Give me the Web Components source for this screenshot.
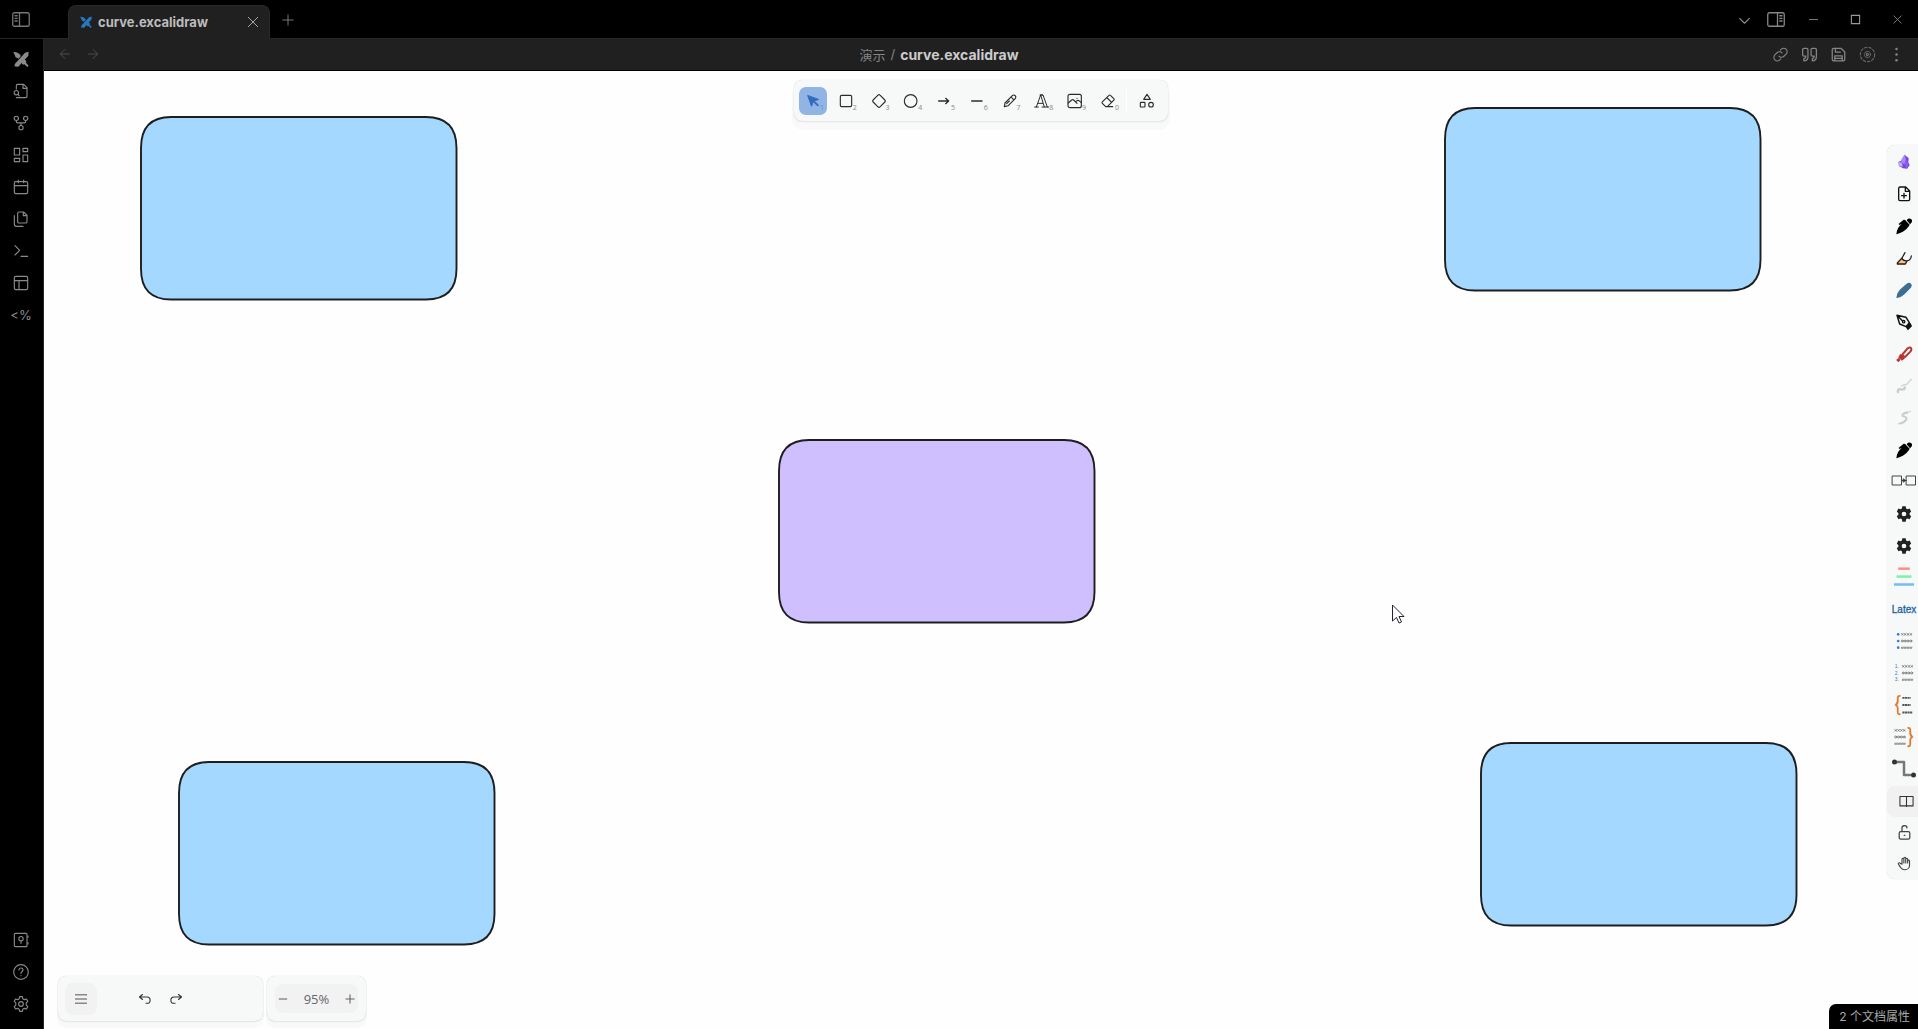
<!DOCTYPE html>
<html lang="zh">
<head>
<meta charset="utf-8">
<title>curve.excalidraw</title>
<style>
html, body { margin: 0; height: 100%; background: #000; }
body { font-family: Inter, "Noto Sans CJK SC", sans-serif; overflow: hidden; }
</style>
</head>
<body>
<app-window></app-window>
<script>
const S = (box, body, extra = '') => `<svg viewBox="${box}" fill="none" stroke="currentColor" stroke-width="1.7" stroke-linecap="round" stroke-linejoin="round" aria-hidden="true" ${extra}>${body}</svg>`;
const B24 = '0 0 24 24';
const swords = '<g fill="currentColor" stroke="none"><path d="M18 2.500l5.500-1.500-.5 6L10 21.500c-.5 1.500-2 2.500-3.500 2L2 23l1-4z"/><path d="M.5 1.500C5 1 9.500 3 11.800 7.500L8.500 11.500 4 9.500z"/><path d="M12.500 17.500l4.500-5 3 2.500-.5 2.500 4 4.500-2 2-4.500-4-2 .5z"/></g>';
const pen = '<g fill="#000" stroke="none"><path d="M15 4.500l5.500 5.500c-3 5.500-9 11.500-20 14.500C1 17 4.500 12 8.800 8.500l-3.300 2-1.700-1.400 7.700-6.600 2.500.5z"/><path d="M16 3.500c1.500-3 4.500-3.600 6.600-2 2.300 1.900 2 4.700-.2 6.500l-1.400 1.200z"/></g>';
const gear = '<path fill="#222" stroke="none" fill-rule="evenodd" d="M9.500 .500h5l.7 3.200 2 1.100 3.100-1 2.500 4.300-2.400 2.700v2.400l2.400 2.200-2.500 4.300-3.100-1-2 1.100-.7 3.700h-5l-.7-3.700-2-1.100-3.100 1-2.500-4.300 2.400-2.200v-2.400L1.200 8.100l2.500-4.300 3.100 1 2-1.100zM12 8.500a3.500 3.500 0 1 0 0 7 3.500 3.500 0 0 0 0-7z"/>';
const row = (x, y, kind) => {
  let out = '';
  for (let i = 0; i < 4; i++) {
    const a = x + i * 3.4;
    out += kind === 'x' ? `<path d="M${a} ${y - 1}l2.200 2m0-2l-2.200 2"/>` : kind === 'o' ? `<circle cx="${a + 1}" cy="${y}" r="1.200"/>` : `<path d="M${a} ${y - .5}h2.400M${a} ${y + .7}h2"/>`;
  }
  return `<g stroke="#666" stroke-width=".9">${out}</g>`;
};
const ICONS = {
  panelLeft: S('0 0 24 20', '<rect x="1" y="1" width="22" height="18" rx="2.500"/><path d="M10 1v18M4 5h3M4 8.500h3M4 12h3"/>'),
  panelRight: S('0 0 24 20', '<rect x="1" y="1" width="22" height="18" rx="2.500"/><path d="M14 1v18M17 5h3M17 8.500h3M17 12h3"/>'),
  swords: S(B24, swords),
  fileSearch: S(B24, '<path d="M5 9V4a2 2 0 0 1 2-2h9l5 5v13a2 2 0 0 1-2 2H5M15 2v6h6"/><circle cx="5" cy="14.500" r="3.300"/><path d="M7.500 17l2 2.500"/>'),
  graph: S(B24, '<circle cx="5" cy="5" r="3.200"/><circle cx="19" cy="5" r="3.200"/><circle cx="12" cy="19" r="3.200"/><path d="M5 8.200v1.600a2 2 0 0 0 2 2h10a2 2 0 0 0 2-2V8.200M12 12v3.800"/>'),
  grid: S(B24, '<path d="M2 2h8v10H2zM15 2h7v5h-7zM15 12h7v10h-7zM2 17h8v5H2z"/>'),
  calendar: S(B24, '<rect x="2" y="4" width="20" height="18" rx="2"/><path d="M8 1.500v4M16 1.500v4M2 10h20"/>'),
  copy: S(B24, '<path d="M16 1.500H9a2 2 0 0 0-2 2V16a2 2 0 0 0 2 2h10a2 2 0 0 0 2-2V6.500zM15.500 1.500V7H21M2 7v13a3 3 0 0 0 3 3h10"/>'),
  terminal: S(B24, '<path d="M3 4l7 7-7 7M12 20h10"/>'),
  layout: S(B24, '<rect x="2" y="2" width="20" height="20" rx="2"/><path d="M2 8.500h20M9 8.500V22"/>'),
  vault: S(B24, '<rect x="2" y="2" width="19" height="20" rx="1.500"/><circle cx="12" cy="10" r="3.200"/><path d="M12 13.200V17M22.500 6v2M22.500 16v2"/>'),
  help: S(B24, '<circle cx="12" cy="12" r="11"/><path d="M9 9a3 3 0 0 1 6 0c0 2-3 2.500-3 5M12 17.500v.2"/>'),
  settings: S(B24, '<path d="M10 1h4l.8 3.200L17 5.500l3.200-.9 2 3.500-2.400 2.300v3.200l2.400 2.300-2 3.500-3.200-.9-2.200 1.300L14 23h-4l-.8-3.200L7 18.500l-3.200.9-2-3.500 2.400-2.300v-3.200L1.800 8.100l2-3.500 3.200.9 2.200-1.300z"/><circle cx="12" cy="12" r="3.500"/>'),
  close: S(B24, '<path d="M4 4l16 16M20 4L4 20"/>'),
  plus: S(B24, '<path d="M12 3v18M3 12h18"/>'),
  minus: S(B24, '<path d="M3 12h18"/>'),
  zoomIn: S(B24, '<path stroke-width="2.600" stroke-linecap="butt" d="M12 1v22M1 12h22"/>'),
  zoomOut: S(B24, '<path stroke-width="2.600" stroke-linecap="butt" d="M2 12h20"/>'),
  square: S(B24, '<path stroke-linejoin="miter" stroke-width="2.400" d="M3 3h18v18H3z"/>'),
  chevron: S(B24, '<path stroke-width="2.200" d="M3 8l9 9 9-9"/>'),
  left: S(B24, '<path stroke-width="2" d="M23 12H1m11-11L1 12l11 11"/>'),
  right: S(B24, '<path stroke-width="2" d="M1 12h22M12 1l11 11-11 11"/>'),
  link: S(B24, '<path d="M9.500 14.500a5.500 5.500 0 0 0 8 .3l3.500-3.500a5.500 5.500 0 0 0-7.800-7.800l-1.500 1.500M14.500 9.500a5.500 5.500 0 0 0-8-.3L3 12.700a5.500 5.500 0 0 0 7.800 7.800l1.500-1.500"/>'),
  quote: S(B24, '<path stroke-width="2" d="M3 2h4.500a2 2 0 0 1 2 2v11c0 5-2 7-6.500 7v-3.500c2 0 3-1 3-4H3a2 2 0 0 1-2-2V4a2 2 0 0 1 2-2zM16.500 2H21a2 2 0 0 1 2 2v11c0 5-2 7-6.500 7v-3.500c2 0 3-1 3-4h-3a2 2 0 0 1-2-2V4a2 2 0 0 1 2-2z"/>'),
  save: S(B24, '<path stroke-width="2" d="M4 2h12l6 6v12a2 2 0 0 1-2 2H4a2 2 0 0 1-2-2V4a2 2 0 0 1 2-2zM7 2v6h8M6 22v-8h12v8M6 18h12"/>'),
  dashGear: S(B24, '<g stroke="#6c6c6c"><circle cx="12" cy="12" r="11.500" stroke-dasharray="4 3"/><circle cx="12" cy="12" r="5" stroke-dasharray="2.500 1.500" stroke-width="1.500"/><path d="M10.500 9.500l4 2.500-4 2.500z"/></g>'),
  dots: S(B24, '<g fill="currentColor" stroke="none"><circle cx="12" cy="3" r="2"/><circle cx="12" cy="12" r="2"/><circle cx="12" cy="21" r="2"/></g>'),
  cursor: S(B24, '<path fill="currentColor" d="M3 3l6.500 18 3-7.800L20 20.500l1.500-1.500-7.700-7L21 9.500z"/>'),
  rect: S(B24, '<rect x="3.500" y="3.500" width="17" height="17" rx="2"/>'),
  diamond: S(B24, '<path d="M10.500 3.200a2 2 0 0 1 3 0l7.300 7.300a2 2 0 0 1 0 3l-7.300 7.300a2 2 0 0 1-3 0l-7.300-7.300a2 2 0 0 1 0-3z"/>'),
  circle: S(B24, '<circle cx="11.500" cy="12" r="9.500"/>'),
  arrow: S(B24, '<path stroke-width="2" d="M4 12h15m-4.500-4l4.500 4-4.500 4"/>'),
  line: S(B24, '<path stroke-width="2" d="M4 12h15.500"/>'),
  pencil: S(B24, '<path d="M3.500 20.500l1-5.500L15.500 4a3 3 0 0 1 4.300 4.300L9 19.200zM14.500 7l2.800 2.800M11 12l-4 4"/>'),
  text: S(B24, '<path stroke-width="1.500" d="M1 21h5.500M12 21h10M3.500 21L10 3h3.500l6.500 18M10 3l5.500 18M6 15.500h7M9 3h4"/>'),
  image: S(B24, '<rect x="1.500" y="2" width="20" height="20" rx="3"/><path d="M15 8h.1M2 15l5-4.500q2-1 3 0l5 5M13 13l2-1.500q1.500-1 3 0l3.500 3"/>'),
  eraser: S(B24, '<path d="M19 20.500H8.500l-5-5a1.500 1.500 0 0 1 0-2.200L13.500 3.500a1.500 1.500 0 0 1 2.200 0l5 5a1.500 1.500 0 0 1 0 2.200L11 20.500M17.500 14L10 6.800"/>'),
  shapes: S(B24, '<path d="M12 2l5 7.500H7z"/><rect x="2" y="14" width="7" height="7" rx="1"/><circle cx="18" cy="17.500" r="3.500"/>'),
  menu: S(B24, '<path stroke-linecap="butt" stroke-width="2.800" d="M0 3.500h24M0 12h24M0 20.500h24"/>'),
  undo: S(B24, '<path stroke-width="2.200" d="M7 3L1 8l6 5M1 8h15a6 6 0 0 1 0 12.500h-2"/>'),
  redo: S(B24, '<path stroke-width="2.200" d="M17 3l6 5-6 5M23 8H8a6 6 0 0 0 0 12.500h2"/>'),
  crystal: S(B24, '<g stroke="none"><path fill="#7747d8" d="M13 1l6 5.500-.5 6L20.500 17l-4 5-6-.5-6-3.500-1-6.500 4-1z"/><path fill="#a88bfa" d="M13 1L8.500 7l-.5 5 4.500 3.500L15 9z"/><path fill="#8a5cf5" d="M15 9l-2.500 6.500L17 22l2-8z"/><path fill="#c3b0f7" d="M4 12l5 1 1 6-5-1z"/></g>'),
  filePlus: S(B24, '<path stroke="#111" stroke-width="2" d="M6 1.500h8.500l6 6V20a2 2 0 0 1-2 2H6a2 2 0 0 1-2-2V3.500a2 2 0 0 1 2-2zM14 2v6h6M12 11v7M8.500 14.500h7"/>'),
  pen: S(B24, pen),
  highlighter: S(B24, '<path fill="#ffc078" stroke="#ffc078" d="M3 19l6-6 7 6-2 2H3z"/><path stroke="#222" stroke-width="1.900" d="M13.500 4L9 12l-7 7.500V21h12l2-3.500M23 9q-1 7-7 7.500-6-.5-7-4.500"/>'),
  marker: S(B24, '<path fill="#3e6f92" stroke="#3e6f92" d="M1.500 23c.5-5 2.500-8.500 5.500-11.500L17 3c3.500-2.500 7.500 1 5 4.500l-9.500 10C9.500 20.500 6.500 22.500 1.500 23z"/>'),
  nib: S(B24, '<path stroke="#111" stroke-width="2.200" d="M1.500 2l4 13 9.500 4 5-6-5-8zM2.500 3l7 7"/><circle cx="11.500" cy="11.500" r="1.800" stroke="#111" stroke-width="2"/><path fill="#111" stroke="#111" d="M16 20l5-6 2 4-5 5z"/>'),
  redPen: S(B24, '<path fill="#fff" stroke="#b93434" stroke-width="3" d="M9 13.500L17 4q4-3 5.500-1t-1 5.500l-8 8z"/><path fill="#b93434" stroke="#b93434" d="M6.500 13l6 5-3.500 3-4.500-4zM1.500 21l2.500-2 1.500 2-2 2z"/>'),
  scribbleA: S(B24, '<path stroke="#ccc" stroke-width="3.600" d="M3 21q-1-5 4-4 7 1 6-3"/><path stroke="#d2d2d2" stroke-width="2" d="M8 12q5-3 8-2l2-3 5-5"/>'),
  scribbleB: S(B24, '<path stroke="#ccc" stroke-width="3.200" d="M17 4q-9 1-7 5 8 2 5 6-3 4-8 5"/><path stroke="#ccc" stroke-width="1.500" d="M3 21l8-3M14 4l8-2"/>'),
  boxes: S('0 0 24 16', '<g stroke="#444" stroke-width="1"><path d="M.5 3h9v9h-9zM14.500 3h9v9h-9zM9.500 7.500h5"/><path fill="#222" d="M11.500 6l2 1.500-2 1.500z"/></g>'),
  gear: S(B24, gear),
  bars: S(B24, '<g stroke-linecap="butt"><path stroke="#ff8f84" stroke-width="3" d="M5 2h14"/><path stroke="#7df2ad" stroke-width="3" d="M3 11.500h18"/><path stroke="#71bdf5" stroke-width="3" d="M0 21h24"/></g>'),
  bullets: S(B24, `<g fill="#2d7fd0" stroke="none"><circle cx="5" cy="4" r="1.600"/><circle cx="5" cy="12" r="1.600"/><circle cx="5" cy="20" r="1.600"/></g>${row(9, 4, 'x')}${row(9, 12, 'o')}${row(9, 20, '-')}`),
  numbers: S(B24, `<g fill="#3a7eb4" stroke="none" font-family="Liberation Sans" font-size="6"><text x="1" y="6">1.</text><text x="1" y="14">2.</text><text x="1" y="22">3.</text></g>${row(10, 4, 'x')}${row(10, 12, 'o')}${row(10, 20, '-')}`),
  braceL: S(B24, '<path stroke="#dc7d35" stroke-width="2.200" d="M7 1Q4 1 4.500 5.500T2 12q3 1 2.500 6.500T7 23"/><g stroke="#555" stroke-width="2.200" stroke-dasharray="2.600 .5" stroke-linecap="butt"><path d="M10 3.500h10M10 12h10M10 21h12"/></g>'),
  braceR: S(B24, `<path stroke="#dc7d35" stroke-width="2.200" d="M17 1q3 0 2.500 4.500T22 12q-3 1-2.500 6.500T17 23"/>${row(1, 4, 'x')}${row(1, 12, 'o')}${row(1, 20, '-')}`),
  connector: S(B24, '<path stroke="#777" stroke-width="2.500" d="M4 5h8v13h6"/><g fill="#333" stroke="none"><circle cx="2.500" cy="5" r="2.500"/><circle cx="21.500" cy="18" r="2.500"/></g>'),
  book: S(B24, '<path stroke="#333" d="M1.500 4h21v15h-21zM12 4v16"/>'),
  unlock: S(B24, '<rect x="3.500" y="10.500" width="17" height="12" rx="2.500" stroke="#444" stroke-width="2"/><path stroke="#444" stroke-width="2" d="M8 10.500V5.500a4 4 0 0 1 8-1M11.500 16.500h1"/>'),
  hand: S(B24, '<path stroke="#444" stroke-width="1.800" d="M8 13V5a1.500 1.500 0 0 1 3 0v6-7.500a1.500 1.500 0 0 1 3 0V11 5a1.500 1.500 0 0 1 3 0v6-3a1.500 1.500 0 0 1 3 0v7a7 7 0 0 1-7 7h-1c-3 0-4-1-6-3.500l-3.500-5a1.600 1.600 0 0 1 2.500-2z"/>')
};

class UiIcon extends HTMLElement {
  connectedCallback() {
    this.attachShadow({ mode: 'open' }).innerHTML = `<style>
      :host { display: block; flex: none; width: var(--icon, 16px); }
      svg { display: block; width: 100%; height: auto; overflow: visible; }
    </style>${ICONS[this.getAttribute('name')]}`;
  }
}
customElements.define('ui-icon', UiIcon);

const RESET = `<style>
  * { box-sizing: border-box; }
  button { font: inherit; color: inherit; background: none; border: 0; padding: 0; margin: 0; display: flex; align-items: center; justify-content: center; }
</style>`;
const btn = (name, label, cls = '') => `<button type="button" class="${cls}" aria-label="${label}"><ui-icon name="${name}"></ui-icon></button>`;
const define = (tag, html) => {
  const t = document.createElement('template');
  t.innerHTML = RESET + html;
  customElements.define(tag, class extends HTMLElement {
    connectedCallback() {
      this.attachShadow({ mode: 'open' }).append(t.content.cloneNode(true));
    }
  });
};

define('title-bar', `<style>
  :host { display: flex; height: 39px; color: #999; border-bottom: 1px solid #262626; background: #000; }
  .toggle { width: 44px; --icon: 18px; padding-right: 2px; color: #777; }
  .tab { display: flex; align-items: center; gap: 6px; width: 202px; margin: 5px 0 -1px 24px; padding: 0 9px 2px 11px; background: #202020; border: 1px solid #292929; border-bottom: 0; border-radius: 8px 8px 0 0; color: #bcbcbc; font-size: 13px; font-weight: 700; --icon: 12px; }
  .tab ui-icon[name=swords] { color: #2878bd; }
  .tab span { flex: 1; }
  .tab button { width: 14px; --icon: 14px; color: #aaa; }
  .add { width: 36px; padding-top: 2px; --icon: 14px; color: #777; }
  .space { flex: 1; }
  .side { width: 32px; --icon: 18px; color: #888; }
  .small { --icon: 13px; padding-top: 2px; }
  .win { width: 42px; --icon: 11px; }
</style>
${btn('panelLeft', '侧边栏', 'toggle')}
<div class="tab"><ui-icon name="swords"></ui-icon><span>curve.excalidraw</span>${btn('close', '关闭标签页')}</div>
${btn('plus', '新标签页', 'add')}<div class="space"></div>
${btn('chevron', '标签页列表', 'side small')}${btn('panelRight', '右侧边栏', 'side')}
${btn('minus', '最小化', 'win')}${btn('square', '最大化', 'win')}${btn('close', '关闭', 'win')}`);

define('side-ribbon', `<style>
  :host { display: flex; flex-direction: column; justify-content: space-between; width: 44px; padding: 4px 0 9px; border-right: 1px solid #262626; box-sizing: border-box; background: #000; color: #8a8a8a; --icon: 16px; }
  button { width: 42px; height: 32px; font-size: 13px; }
</style>
<nav>${[['swords', '新建绘图'], ['fileSearch', '快速切换'], ['graph', '关系图谱'], ['grid', '白板'], ['calendar', '日记'], ['copy', '模板'], ['terminal', '命令面板'], ['layout', '工作区']].map(a => btn(...a)).join('')}<button type="button">&lt;%</button></nav>
<div>${btn('vault', '仓库')}${btn('help', '帮助')}${btn('settings', '设置')}</div>`);

define('view-header', `<style>
  :host { display: flex; align-items: center; height: 32px; box-sizing: border-box; padding: 0 7px 1px; background: #202020; border-bottom: 1px solid #000; color: #858585; font-size: 13px; }
  .nav, .actions { display: flex; }
  .nav { margin-right: 5px; color: #555; --icon: 10px; }
  .nav button { width: 28px; height: 28px; }
  .title { flex: 1; display: flex; justify-content: center; align-items: center; gap: 5px; }
  .title a { color: inherit; text-decoration: none; }
  .title strong { font-size: 14px; font-weight: 700; color: #ccc; }
  .actions { --icon: 15px; }
  .actions button { width: 29px; height: 28px; }
</style>
<div class="nav">${btn('left', '后退')}${btn('right', '前进')}</div>
<div class="title"><a href="#">演示</a><span>/</span><strong>curve.excalidraw</strong></div>
<div class="actions">${[['link', '链接'], ['quote', '引用'], ['save', '保存'], ['dashGear', '脚本'], ['dots', '更多选项']].map(a => btn(...a)).join('')}</div>`);

define('tool-bar', `<style>
  :host { display: flex; align-items: center; height: 41px; box-sizing: border-box; width: 374px; padding: 0 7px 0 5px; background: #f7f8f8; border-radius: 8px; box-shadow: 0 0 1px #0003, 0 1px 2px #00000012, 0 7px 0 2px #00000005; color: #2b2b2b; }
  .tools { flex: 1; display: flex; justify-content: space-between; }
  button { position: relative; width: 28px; height: 28px; border-radius: 7px; }
  .on { background: #91b4e4; --icon: 14px; }
  .on ui-icon { color: #2f6cbd; }
  .tools span { position: absolute; right: 3px; bottom: 3px; font: 7px/8px "Open Sans", sans-serif; color: #888; }
  .tools .on span { color: #5c8bd0; }
  .divider { width: 1px; height: 24px; margin: 0 6px 0 4px; background: #fff; }
</style>
<div class="tools">${['cursor', 'rect', 'diamond', 'circle', 'arrow', 'line', 'pencil', 'text', 'image', 'eraser'].map((n, i) => `<button type="button" aria-label="${n}" class="${i ? '' : 'on'}"><ui-icon name="${n}"></ui-icon><span>${(i + 1) % 10}</span></button>`).join('')}</div>
<div class="divider"></div>${btn('shapes', '更多工具')}`);

define('bottom-bar', `<style>
  :host { display: flex; gap: 4px; height: 45px; color: #333; }
  .card { display: flex; align-items: center; background: #f7f8f8; border-radius: 8px; box-shadow: 0 0 1px #0003, 0 1px 2px #00000012, 0 6px 0 1px #00000005; }
  .history { width: 205px; padding: 0 7px; --icon: 12px; }
  .menu { width: 32px; height: 32px; margin-right: 32px; border-radius: 8px; background: #f2f2f3; color: #888; }
  .history button + button { width: 31px; height: 32px; }
  .zoom { width: 99px; padding: 0 8px; }
  .group { flex: 1; display: flex; height: 29px; border-radius: 8px; background: #f2f2f3; font: 13px "Open Sans", sans-serif; color: #555; --icon: 10px; }
  .group button { width: 16px; color: #666; }
  .group .value { flex: 1; }
</style>
<div class="card history">${btn('menu', '菜单', 'menu')}${btn('undo', '撤销')}${btn('redo', '重做')}</div>
<div class="card zoom"><div class="group">${btn('zoomOut', '缩小')}<button type="button" class="value">95%</button>${btn('zoomIn', '放大')}</div></div>`);

define('script-panel', `<style>
  :host { display: block; width: 31px; background: #f7f8f8; border-radius: 8px 0 0 8px; box-shadow: 0 0 1px #0003; padding-top: 1px; }
  button { width: 34px; height: 32px; font: 10px "Liberation Sans", sans-serif; color: #20609c; }
  .latex { -webkit-text-stroke: 0.3px #20609c; padding-bottom: 2px; }
  .wide { --icon: 24px; padding-bottom: 2px; }
  .bars { --icon: 20px; padding-bottom: 2px; }
  .late { height: 31px; --icon: 15px; }
  .read { width: 31px; padding-left: 7px; background: #f1f1f2; border-radius: 8px 0 0 8px; }
</style>
${['crystal', 'filePlus', 'pen', 'highlighter', 'marker', 'nib', 'redPen', 'scribbleA', 'scribbleB', 'pen'].map(n => btn(n, n)).join('')}
${btn('boxes', 'boxes', 'wide')}${btn('gear', 'settings')}${btn('gear', 'settings')}${btn('bars', 'bars', 'bars')}
<button type="button" class="latex">Latex</button>
${['bullets', 'numbers', 'braceL', 'braceR'].map(n => btn(n, n, 'bars')).join('')}${btn('connector', 'connector', 'wide')}
${btn('book', 'book', 'late read')}${btn('unlock', 'unlock', 'late')}${btn('hand', 'hand', 'late')}`);

class CanvasShape extends HTMLElement {
  connectedCallback() {
    this.style.left = this.getAttribute('x') + 'px';
    this.style.top = this.getAttribute('y') + 'px';
    this.attachShadow({ mode: 'open' }).innerHTML = `<style>
      :host { position: absolute; width: 318px; height: 185px; }
      svg { display: block; }
    </style><svg width="318" height="185"><path d="M31 1H286Q316.500 1 316.500 32V153Q316.500 183.500 286 183.500H31Q1 183.500 1 153V32Q1 1 31 1Z" fill="${this.getAttribute('fill')}" stroke="#1e1e1e" stroke-width="1.900"/></svg>`;
  }
}
customElements.define('canvas-shape', CanvasShape);

define('drawing-view', `<style>
  :host { position: relative; display: grid; min-height: 0; overflow: hidden; background: #fefefe; }
  .scene { position: absolute; inset: 0; }
  .pointer { position: absolute; left: 1348px; top: 533px; }
  tool-bar, bottom-bar, script-panel, .status { grid-area: 1 / 1; z-index: 1; }
  tool-bar { justify-self: center; align-self: start; margin-top: 9px; }
  bottom-bar { justify-self: start; align-self: end; margin: 0 0 8px 14px; }
  script-panel { justify-self: end; align-self: start; margin-top: 74px; }
  .status { justify-self: end; align-self: end; padding: 4px 8px 3px 10px; background: #000; color: #aaa; border-radius: 7px 0 0 0; font: 12px/18px Inter, "Noto Sans CJK SC", sans-serif; }
</style>
<div class="scene">
  <canvas-shape x="96" y="45" fill="#a5d8ff"></canvas-shape>
  <canvas-shape x="1400" y="36" fill="#a5d8ff"></canvas-shape>
  <canvas-shape x="734" y="368" fill="#d0bfff"></canvas-shape>
  <canvas-shape x="134" y="690" fill="#a5d8ff"></canvas-shape>
  <canvas-shape x="1436" y="671" fill="#a5d8ff"></canvas-shape>
  <svg class="pointer" width="13" height="20" viewBox="0 0 13 20" aria-hidden="true"><path d="M.5 1v16l4-3.500 2.500 5.500 2.500-1-2.500-5.500h5z" fill="#fff" stroke="#223"/></svg>
</div>
<tool-bar></tool-bar><bottom-bar></bottom-bar><script-panel></script-panel>
<div class="status">2 个文档属性</div>`);

define('app-window', `<style>
  :host { display: grid; grid-template: auto 1fr / auto 1fr; height: 100vh; }
  title-bar { grid-column: 1 / 3; box-sizing: border-box; }
  main { display: grid; grid-template-rows: auto 1fr; min-width: 0; min-height: 0; }
</style>
<title-bar></title-bar><side-ribbon></side-ribbon>
<main><view-header></view-header><drawing-view></drawing-view></main>`);
</script>
</body>
</html>
